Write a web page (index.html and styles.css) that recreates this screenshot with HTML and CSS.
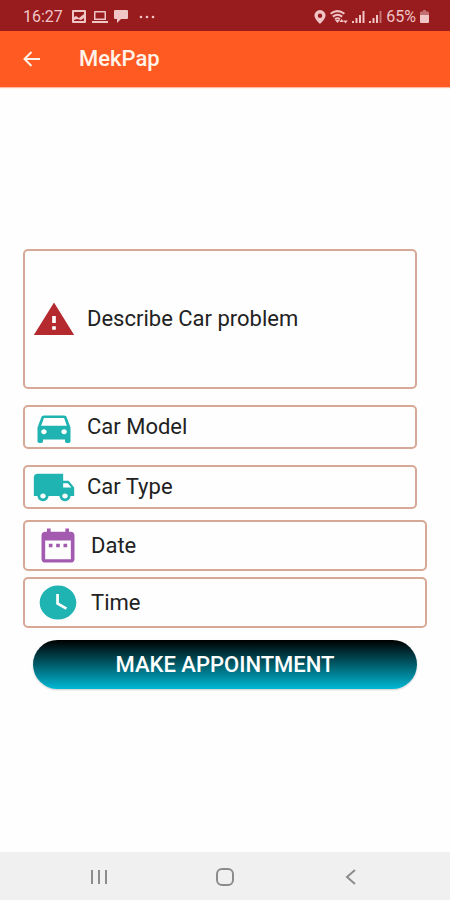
FILE: index.html
```html
<!DOCTYPE html>
<html lang="en">
<head>
    <meta charset="UTF-8">
    <meta name="viewport" content="width=device-width, initial-scale=1.0">
    <title>MekPap</title>
    <link rel="stylesheet" href="styles.css">
</head>
<body>
    <!-- Status bar -->
    <div class="status-bar">
        <span class="status-text">16:27</span>
        <div class="status-left">
            <svg width="14" height="13" viewBox="0 0 14 13"><path fill-rule="evenodd" d="M1 0h12a1 1 0 0 1 1 1v11a1 1 0 0 1-1 1H1a1 1 0 0 1-1-1V1a1 1 0 0 1 1-1zM2 2v5l2-1 3 2 5-4V2zM2 11h10V8L9 10 5 9 2 10z"/></svg>
            <svg width="16" height="12" viewBox="0 0 16 12"><path fill-rule="evenodd" d="M3 0h10a1 1 0 0 1 1 1v8H2V1a1 1 0 0 1 1-1zM3.500 1.500v6h9v-6zM0 10h16v2H0z"/></svg>
            <svg width="14" height="13" viewBox="0 0 14 13"><path d="M1 0h12a1 1 0 0 1 1 1v7a1 1 0 0 1-1 1H7l-4 4V9H1a1 1 0 0 1-1-1V1a1 1 0 0 1 1-1z"/></svg>
        </div>
        <svg class="status-dots" width="16" height="4" viewBox="0 0 16 4"><circle cx="2" cy="2" r="1.300"/><circle cx="8" cy="2" r="1.300"/><circle cx="14" cy="2" r="1.300"/></svg>
        <div class="status-right">
            <svg width="12" height="14" viewBox="0 0 12 14"><path fill-rule="evenodd" d="M6 0a5.600 5.600 0 0 1 5.600 5.600C11.600 9 6 14 6 14S.4 9 .4 5.600A5.600 5.600 0 0 1 6 0zm0 3.600a2.200 2.200 0 1 0 0 4.400 2.200 2.200 0 0 0 0-4.400z"/></svg>
            <svg class="wifi" width="18" height="14" viewBox="0 0 18 14"><path fill="none" stroke="#efc5c6" stroke-width="2" d="M.6 3.800q6.900-5.400 13.800 0M2.800 6.600q4.700-3.600 9.400 0M5 9.200q2.500-2 5 0"/><path d="M5 10h5l-2.500 3zM9.500 12l2.200-3 2.200 3zM13.300 10.500h4.400L15.500 13.500z"/></svg>
            <svg width="13" height="12" viewBox="0 0 13 12"><path d="M0 10h2v2H0zM3.500 7h2v5h-2zM7 4h2v8H7zM10.500 0h2v12h-2z"/></svg>
            <svg width="13" height="12" viewBox="0 0 13 12"><path d="M0 10h2v2H0zM3.500 7h2v5h-2zM7 4h2v8H7z"/><path opacity=".5" d="M10.500 0h2v12h-2z"/></svg>
            <span class="status-text">65%</span>
            <svg width="9" height="13" viewBox="0 0 9 13"><path opacity=".5" d="M3 0h3v1.500h2a1 1 0 0 1 1 1V6H0V2.500a1 1 0 0 1 1-1h2z"/><path d="M0 5h9v7a1 1 0 0 1-1 1H1a1 1 0 0 1-1-1z"/></svg>
        </div>
    </div>

    <!-- Toolbar -->
    <header class="toolbar">
        <button class="back-btn" type="button" aria-label="Back">
            <svg width="18" height="16" viewBox="0 0 18 16"><path d="M17 8H2M8.500 1L1.500 8l7 7"/></svg>
        </button>
        <h1>MekPap</h1>
    </header>

    <main>
        <form class="appointment-form">
            <label class="field problem">
                <svg class="icon red" viewBox="0 0 24 24" preserveAspectRatio="none"><path d="M1 21h22L12 2 1 21zm12-3h-2v-2h2v2zm0-4h-2v-4h2v4z"/></svg>
                <input type="text" name="problem" aria-label="Describe Car problem" placeholder="Describe Car problem">
            </label>
            <label class="field">
                <svg class="icon teal" viewBox="0 0 24 24" preserveAspectRatio="none"><path d="M18.920 6.010C18.720 5.420 18.160 5 17.500 5h-11c-.66 0-1.210.42-1.420 1.010L3 12v8c0 .55.45 1 1 1h1c.55 0 1-.45 1-1v-1h12v1c0 .55.45 1 1 1h1c.55 0 1-.45 1-1v-8l-2.080-5.990zM6.500 16c-.83 0-1.500-.67-1.500-1.500S5.670 13 6.500 13s1.500.67 1.500 1.500S7.330 16 6.500 16zm11 0c-.83 0-1.500-.67-1.500-1.500s.67-1.500 1.500-1.500 1.500.67 1.500 1.500-.67 1.500-1.500 1.500zM5 11l1.500-4.500h11L19 11H5z"/></svg>
                <input type="text" name="model" aria-label="Car Model" placeholder="Car Model">
            </label>
            <label class="field">
                <svg class="icon teal" viewBox="0 0 24 24" preserveAspectRatio="none"><path d="M20 8h-3V4H3c-1.100 0-2 .9-2 2v11h2c0 1.660 1.340 3 3 3s3-1.340 3-3h6c0 1.660 1.340 3 3 3s3-1.340 3-3h2v-5l-3-4zM6 18.500c-.83 0-1.500-.67-1.500-1.500s.67-1.500 1.500-1.500 1.500.67 1.500 1.500-.67 1.500-1.500 1.500zm13.500-9l1.960 2.500H17V9.500h2.500zm-1.500 9c-.83 0-1.500-.67-1.500-1.500s.67-1.500 1.500-1.500 1.500.67 1.500 1.500-.67 1.500-1.500 1.500z"/></svg>
                <input type="text" name="type" aria-label="Car Type" placeholder="Car Type">
            </label>
            <label class="field picker">
                <svg class="icon purple" viewBox="0 0 24 24" preserveAspectRatio="none"><path d="M9 11H7v2h2v-2zm4 0h-2v2h2v-2zm4 0h-2v2h2v-2zm2-7h-1V2h-2v2H8V2H6v2H5c-1.110 0-1.990.9-1.990 2L3 20c0 1.100.89 2 2 2h14c1.100 0 2-.9 2-2V6c0-1.100-.9-2-2-2zm0 16H5V9h14v11z"/></svg>
                <input type="text" name="date" aria-label="Date" placeholder="Date">
            </label>
            <label class="field picker">
                <svg class="icon teal" viewBox="0 0 24 24" preserveAspectRatio="none"><path d="M12 2C6.500 2 2 6.500 2 12s4.500 10 10 10 10-4.500 10-10S17.500 2 12 2zm4.200 14.200L11 13V7h1.500v5.200l4.500 2.700-.8 1.300z"/></svg>
                <input type="text" name="time" aria-label="Time" placeholder="Time">
            </label>
            <button type="submit" class="submit-btn">MAKE APPOINTMENT</button>
        </form>
    </main>

    <!-- System navigation -->
    <nav class="nav-bar">
        <button type="button" aria-label="Recent apps">
            <svg width="20" height="18" viewBox="0 0 20 18"><path d="M3 2v14M10 2v14M17 2v14"/></svg>
        </button>
        <button type="button" aria-label="Home">
            <svg width="20" height="18" viewBox="0 0 20 18"><rect x="2" y="1" width="16" height="16" rx="5"/></svg>
        </button>
        <button type="button" aria-label="Back">
            <svg width="20" height="18" viewBox="0 0 20 18"><path d="M14 2L6 9l8 7"/></svg>
        </button>
    </nav>
</body>
</html>
```

FILE: styles.css
```css
* {
    box-sizing: border-box;
}

body {
    display: flex;
    flex-direction: column;
    min-height: 100vh;
    margin: 0;
    background-color: #fefefe;
    font-family: Roboto, "Liberation Sans", sans-serif;
}

button {
    padding: 0;
    border: none;
    background: none;
    font-family: inherit;
    cursor: pointer;
}

svg {
    display: block;
    flex-shrink: 0;
}

.status-bar {
    display: flex;
    align-items: center;
    height: 31px;
    padding: 2px 21px 0 23px;
    background-color: #981b1e;
    color: #efc5c6;
    fill: #efc5c6;
}

.status-text {
    font-size: 16px;
    line-height: 20px;
}

.status-left {
    display: flex;
    align-items: center;
    gap: 6px;
    margin-left: 9px;
}

.status-dots {
    margin-left: 11px;
}

.status-right {
    display: flex;
    align-items: center;
    gap: 4px;
    margin-left: auto;
}

.toolbar {
    display: flex;
    align-items: center;
    gap: 38px;
    height: 56px;
    padding: 0 23px;
    background-color: #ff5a22;
    box-shadow: 0 1px 1px rgba(255, 90, 34, 0.4);
    color: #fff3ea;
}

.toolbar h1 {
    margin: 0;
    font-size: 22px;
    font-weight: 500;
    line-height: 28px;
}

.back-btn svg {
    fill: none;
    stroke: #fff3ea;
    stroke-width: 2;
}

main {
    display: flex;
    flex: 1;
    flex-direction: column;
    justify-content: center;
    padding: 0 23px 1px;
}

.appointment-form {
    display: flex;
    flex-direction: column;
}

.field {
    display: flex;
    align-items: center;
    gap: 11px;
    height: 44px;
    margin: 0 10px 16px 0;
    padding: 0 7px;
    border: 2px solid #d8a896;
    border-radius: 5px;
}

.field input {
    flex: 1;
    min-width: 0;
    padding: 0;
    border: none;
    outline: none;
    background: none;
    color: #222;
    font-family: inherit;
    font-size: 22px;
    line-height: 28px;
}

.field input::placeholder {
    color: #222;
    opacity: 1;
}

.problem {
    height: 140px;
}

.picker {
    height: 51px;
    margin: 0 0 6px;
    padding: 0 11px;
}

.field:not(.picker):has(+ .picker) {
    margin-bottom: 11px;
}

.icon {
    width: 44px;
    height: 41px;
}

.red {
    fill: #b52a2e;
}

.teal {
    fill: #1fb3b1;
}

.purple {
    fill: #a35bb0;
}

.submit-btn {
    height: 49px;
    margin: 6px 10px 0;
    border-radius: 25px;
    background: linear-gradient(#000, #00b8d4);
    box-shadow: 0 1px 2px rgba(0, 0, 0, 0.2);
    color: #fff;
    font-size: 22px;
    font-weight: 500;
}

.nav-bar {
    display: flex;
    align-items: center;
    height: 48px;
    padding: 2px 8% 0;
    background-color: #f0f0f0;
}

.nav-bar button {
    display: flex;
    flex: 1;
    justify-content: center;
}

.nav-bar svg {
    fill: none;
    stroke: #8c8c8c;
    stroke-width: 2;
}
```
